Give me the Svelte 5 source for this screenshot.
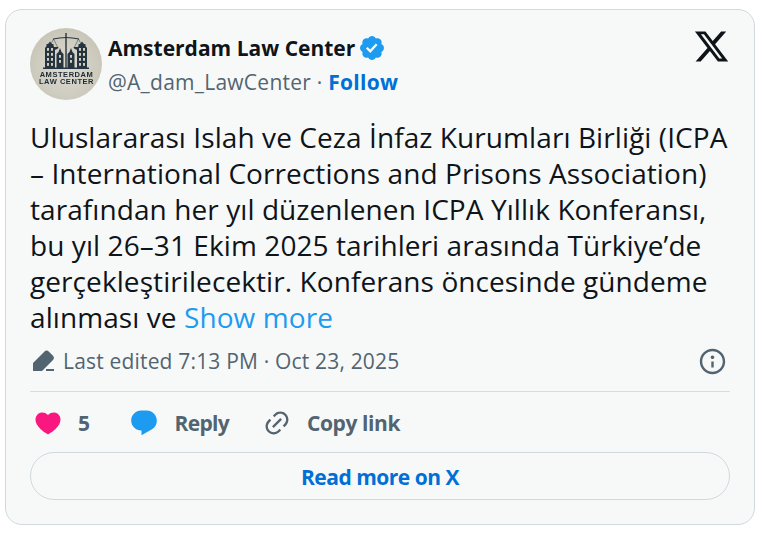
<script>
	const lines = [
		"Uluslararası Islah ve Ceza İnfaz Kurumları Birliği (ICPA",
		"– International Corrections and Prisons Association)",
		"tarafından her yıl düzenlenen ICPA Yıllık Konferansı,",
		"bu yıl 26–31 Ekim 2025 tarihleri arasında Türkiye’de",
		"gerçekleştirilecektir. Konferans öncesinde gündeme"
	];
	// window rows of the canal houses in the avatar
	const windows = [
		[17, 20], [21, 20], [17, 25], [21, 25], [17, 30], [21, 30], [17, 35], [21, 35],
		[49, 20], [53, 20], [49, 25], [53, 25], [49, 30], [53, 30], [49, 35], [53, 35],
		[29, 27], [29, 32], [40, 27], [40, 32]
	];
</script>

<div class="page">
	<article class="card">
		<header class="head">
			<svg class="avatar" viewBox="0 0 72 72" aria-hidden="true">
				<defs>
					<radialGradient id="disc" cx="50%" cy="55%" r="55%">
						<stop offset="0%" stop-color="#dedcd2" />
						<stop offset="100%" stop-color="#c8c5b8" />
					</radialGradient>
				</defs>
				<circle cx="36" cy="36" r="36" fill="url(#disc)" />
				<g class="logo" fill="#26343f">
					<rect x="35.300" y="5" width="1.400" height="35" />
					<path d="M23 10.500q13-3 26 0v.900q-13-3-26 0z" />
					<path d="M23.500 11l-4 8M23.500 11l4 8M48.500 11l-4 8M48.500 11l4 8" fill="none" stroke="#26343f" stroke-width=".5" />
					<path d="M18.500 19h10a5 3 0 0 1-10 0zM43.500 19h10a5 3 0 0 1-10 0z" />
					<path d="M15 40V20l1.500-2v-2h1.500l2-2.500 2 2.500h1.500v2l1.500 2v20z" />
					<path d="M47 40V20l1.500-2v-2h1.500l2-2.500 2 2.500h1.500v2l1.500 2v20z" />
					<path d="M26.500 40V26l2-2 1.500-4 1.500 4 2 2v14z" />
					<path d="M37.500 40V26l2-2 1.500-4 1.500 4 2 2v14z" />
					<rect x="13" y="39.500" width="46" height="1.500" />
				</g>
				<g fill="#cfccc0">
					{#each windows as [x, y]}
						<rect {x} {y} width="2" height="2.800" />
					{/each}
				</g>
				<text x="36.500" y="48.500" class="logo-text">AMSTERDAM</text>
				<text x="36.500" y="55.500" class="logo-text">LAW CENTER</text>
			</svg>
			<div class="who">
				<div class="name">
					Amsterdam Law Center
					<svg class="badge" viewBox="0 0 24 24" aria-hidden="true">
						<path d="M22.250 12c0-1.430-.880-2.670-2.190-3.340.460-1.390.200-2.900-.810-3.910s-2.520-1.270-3.910-.810c-.660-1.310-1.910-2.190-3.340-2.190s-2.670.880-3.330 2.190c-1.400-.460-2.910-.200-3.920.810s-1.260 2.520-.800 3.910c-1.310.670-2.200 1.910-2.200 3.340s.890 2.670 2.200 3.340c-.460 1.390-.210 2.900.800 3.910s2.520 1.260 3.910.810c.670 1.310 1.910 2.190 3.340 2.190s2.680-.880 3.340-2.190c1.390.450 2.900.200 3.910-.810s1.270-2.520.810-3.910c1.310-.670 2.190-1.910 2.190-3.340zm-11.710 4.200L6.800 12.460l1.410-1.420 2.260 2.260 4.800-5.230 1.470 1.360-6.200 6.770z" />
					</svg>
				</div>
				<div class="handle">@A_dam_LawCenter · <span class="follow">Follow</span></div>
			</div>
			<svg class="x-logo" viewBox="0 0 24 24" aria-hidden="true">
				<path d="M18.244 2.250h3.308l-7.227 8.260 8.502 11.240H16.170l-5.214-6.817L4.990 21.750H1.680l7.730-8.835L1.254 2.250H8.080l4.713 6.231zm-1.161 17.520h1.833L7.084 4.126H5.117z" />
			</svg>
		</header>

		<p class="text">
			{#each lines as line}
				<span class="line">{line}</span>
			{/each}
			<span class="line">alınması ve <span class="more">Show more</span></span>
		</p>

		<div class="meta">
			<svg class="pencil" viewBox="0 0 24 24" aria-hidden="true">
				<path d="M1 22v-8L12.500 2.500c1.200-1.200 3-1.200 4.200 0L21 6.800c1.200 1.200 1.200 3 0 4.200L10 22zM14 20h8v2h-8z" />
			</svg>
			<span class="stamp">Last edited 7:13 PM · Oct 23, 2025</span>
			<svg class="info" viewBox="0 0 24 24" aria-hidden="true">
				<path d="M13.500 8.500c0 .830-.670 1.500-1.500 1.500s-1.500-.670-1.500-1.500S11.170 7 12 7s1.500.670 1.500 1.500zM13 17v-5h-2v5h2zm-1 5.500c5.800 0 10.500-4.700 10.500-10.500S17.800 1.500 12 1.500 1.500 6.200 1.500 12 6.200 22.500 12 22.500zM20.500 12c0 4.690-3.810 8.500-8.500 8.500S3.500 16.690 3.500 12 7.310 3.500 12 3.500s8.500 3.810 8.500 8.500z" />
			</svg>
		</div>

		<div class="actions">
			<div class="action likes">
				<svg viewBox="0 0 24 24" fill="#f91880" aria-hidden="true">
					<path d="M20.884 13.190c-1.351 2.480-4.001 5.120-8.379 7.670l-.503.300-.504-.300c-4.379-2.550-7.029-5.190-8.382-7.670-1.360-2.500-1.410-4.860-.514-6.670.887-1.790 2.647-2.910 4.601-3.010 1.651-.090 3.368.560 4.798 2.010 1.429-1.450 3.146-2.100 4.796-2.010 1.954.100 3.714 1.220 4.601 3.010.896 1.810.846 4.170-.514 6.670z" />
				</svg>
				<span>5</span>
			</div>
			<div class="action reply">
				<svg viewBox="0 0 24 24" fill="#1d9bf0" aria-hidden="true">
					<path d="M1.751 10c0-4.420 3.584-8 8.005-8h4.366c4.490 0 8.129 3.640 8.129 8.130 0 2.960-1.607 5.680-4.196 7.110l-8.054 4.460v-3.690h-.067c-4.490.100-8.183-3.510-8.183-8.010z" />
				</svg>
				<span>Reply</span>
			</div>
			<div class="action copy">
				<svg viewBox="0 0 24 24" fill="#536471" aria-hidden="true">
					<path d="M18.360 5.640c-1.950-1.960-5.110-1.960-7.070 0L9.880 7.050 8.460 5.640l1.420-1.420c2.730-2.730 7.160-2.730 9.900 0 2.730 2.740 2.730 7.170 0 9.900l-1.420 1.420-1.410-1.420 1.410-1.410c1.960-1.960 1.960-5.120 0-7.070zm-2.120 3.530l-7.070 7.070-1.410-1.410 7.070-7.070 1.410 1.410zm-12.020.710l1.420-1.420 1.410 1.420-1.410 1.410c-1.960 1.960-1.960 5.120 0 7.070 1.950 1.960 5.110 1.960 7.070 0l1.410-1.410 1.420 1.410-1.420 1.420c-2.730 2.730-7.160 2.730-9.900 0-2.730-2.740-2.730-7.170 0-9.900z" />
				</svg>
				<span>Copy link</span>
			</div>
		</div>

		<div class="read-more">Read more on X</div>
	</article>
</div>

<style>
	:global(body) {
		margin: 0;
		background: #fff;
	}

	.page {
		padding: 9px 7px 12px 5px;
		font-family: "Open Sans", "Noto Sans", sans-serif;
	}

	.card {
		box-sizing: border-box;
		height: 516px;
		padding: 18px 24px 24px;
		background: #f7f9f9;
		border: 1px solid #cfd9de;
		border-radius: 17px;
	}

	.head {
		display: flex;
		align-items: flex-start;
		gap: 6px;
		height: 72px;
	}

	.avatar {
		width: 72px;
		height: 72px;
		flex: none;
		filter: blur(0.35px);
	}

	.logo-text {
		font-family: "Liberation Sans", sans-serif;
		font-size: 7.500px;
		font-weight: 700;
		text-anchor: middle;
		letter-spacing: 0.55px;
		fill: #1f2a33;
	}

	.who {
		flex: 1;
		padding-top: 3px;
	}

	.name {
		display: flex;
		align-items: center;
		gap: 3px;
		height: 34px;
		font-size: 21px;
		font-weight: 700;
		color: #0f1419;
	}

	.badge {
		width: 28px;
		height: 28px;
		fill: #1d9bf0;
	}

	.handle {
		font-size: 21px;
		line-height: 34px;
		letter-spacing: 0.25px;
		color: #536471;
	}

	.follow {
		font-weight: 700;
		color: #006fd6;
	}

	.x-logo {
		width: 37px;
		height: 37px;
		flex: none;
		fill: #0f1419;
	}

	.text {
		margin: 19px 0 0;
		font-size: 28px;
		line-height: 36px;
		letter-spacing: 0.08px;
		color: #0f1419;
	}

	.line {
		display: block;
		white-space: nowrap;
	}

	.more {
		color: #1d9bf0;
	}

	.meta {
		display: flex;
		align-items: center;
		margin-top: 8px;
		height: 36px;
		padding-bottom: 12px;
		border-bottom: 1px solid #d9dcde;
		color: #536471;
	}

	.pencil {
		width: 24px;
		height: 24px;
		fill: #536471;
		flex: none;
		margin-left: 2px;
	}

	.stamp {
		margin-left: 7px;
		font-size: 21px;
		letter-spacing: 0.18px;
		flex: 1;
	}

	.info {
		width: 29px;
		height: 29px;
		fill: #536471;
		margin-right: 3px;
	}

	.actions {
		display: flex;
		align-items: center;
		box-sizing: border-box;
		height: 60px;
		padding-top: 2px;
		font-size: 21px;
		font-weight: 700;
		letter-spacing: -0.4px;
		color: #536471;
	}

	.action {
		display: flex;
		align-items: center;
	}

	.action svg {
		width: 30px;
		height: 30px;
		flex: none;
	}

	.likes {
		margin-left: 3px;
	}

	.likes span {
		margin-left: 15px;
	}

	.reply {
		margin-left: 39px;
	}

	.reply span {
		margin-left: 16px;
		letter-spacing: -0.7px;
	}

	.copy {
		margin-left: 34px;
	}

	.copy svg {
		width: 28px;
		height: 28px;
	}

	.copy span {
		margin-left: 16px;
	}

	.read-more {
		display: flex;
		align-items: center;
		justify-content: center;
		box-sizing: content-box;
		height: 45px;
		padding-top: 1px;
		border: 1px solid #cfd9de;
		border-radius: 24px;
		font-size: 21px;
		font-weight: 700;
		letter-spacing: -0.5px;
		color: #006fd6;
	}
</style>
